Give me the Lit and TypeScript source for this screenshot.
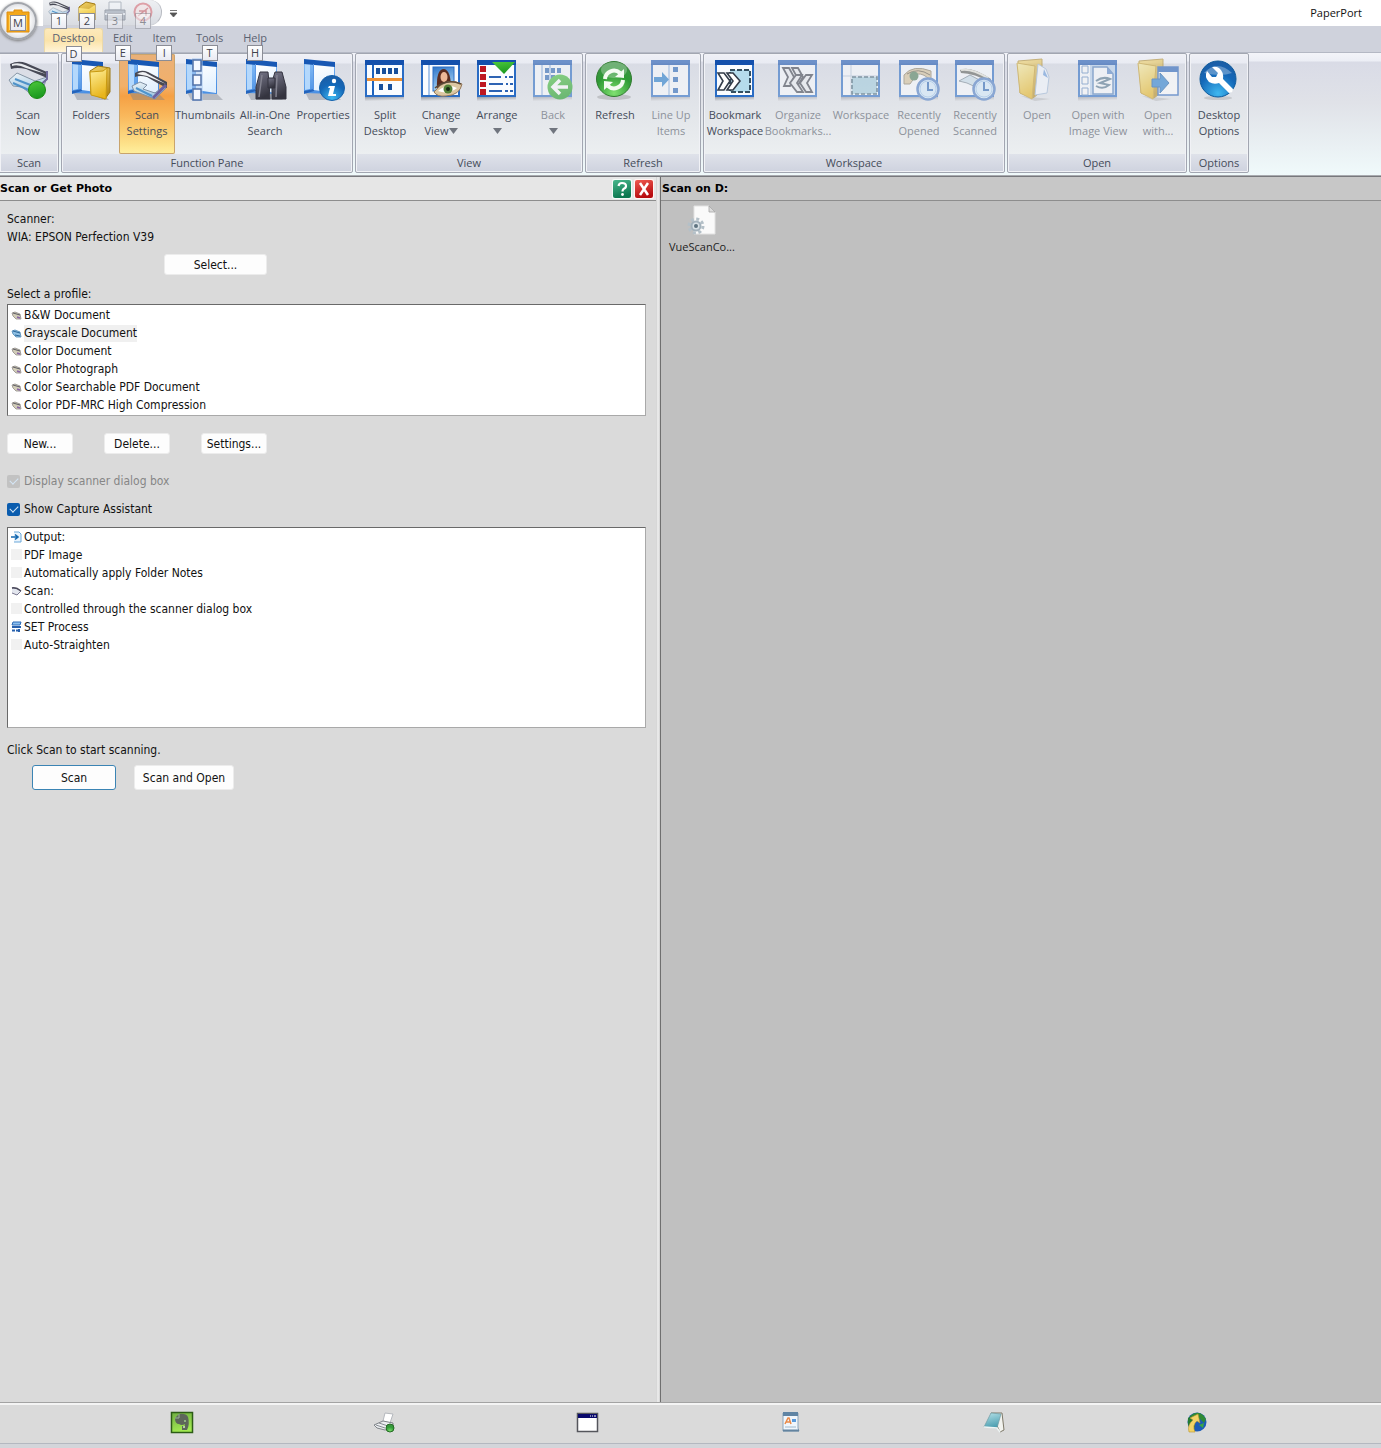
import { LitElement, html, svg, css, nothing } from "lit";
import { customElement, state } from "lit/decorators.js";
import { classMap } from "lit/directives/class-map.js";

/* ---------- shared drawing parts ---------- */

const frontWindow = (inner: unknown) => svg`
  <rect x="2" y="40" width="39" height="4" fill="url(#shade)"/>
  <rect x="2" y="3" width="39" height="37" fill="#2a6cc4"/>
  <rect x="2" y="3" width="39" height="5" fill="#1450ac"/>
  <rect x="4" y="8" width="35" height="30" fill="#fafcff"/>
  ${inner}`;

const sideWindow = (inner: unknown) => svg`
  <path d="M4 35 L34 37 L40 43 L8 43Z" fill="#777c86" opacity=".4"/>
  <path d="M3 3 L34 6 V37 L3 36Z" fill="url(#pane)"/>
  <path d="M13 7 L33 9 V36 L13 33Z" fill="url(#paper)"/>
  <path d="M4 6 L9 7 V32 L4 33Z" fill="#b4d8fc"/>
  <path d="M3 2 L34 5 V10 L3 7Z" fill="#1858b4"/>
  <path d="M3 34 L13 32 V34 L3 37Z" fill="#2464bc"/>
  <path d="M12.500 7 V33" stroke="#5c98e4"/>
  ${inner}`;

const scannerShape = svg`
  <path d="M3 23 L11 16 L29 24 L35 22 L41 20 L38 29 L26 38 L16 30 L7 29Z" fill="url(#glass)" stroke="#8696a6"/>
  <path d="M9 22 L27 29 M7 26 L25 34" stroke="#4f92c8" stroke-width="2"/>
  <path d="M4 7 Q12 3 20 6 L41 15 V21 L20 12 Q11 10 5 12Z" fill="#474955"/>
  <path d="M6 7 Q13 5 19 8 L40 17 L20 11 Q12 7 6 9Z" fill="#e9ecef"/>
  <path d="M41 14 V22 L31 31" stroke="#6f6a9c" stroke-width="2" fill="none"/>`;

const clock = svg`
  <circle cx="31" cy="32" r="10.5" fill="#d6ecfc" stroke="#4d7dc4" stroke-width="2.5"/>
  <circle cx="31" cy="32" r="8" fill="none" stroke="#9cc4ec"/>
  <path d="M31 25 V33 H36" fill="none" stroke="#2a66b4" stroke-width="2"/>`;

const folderOpen = svg`
  <path d="M3 4 L27 2 L27 34 L18 41 L5 36Z" fill="url(#goldDark)" stroke="#a98524"/>
  <path d="M2 6 L20 9 L17 42 L5 36Z" fill="url(#gold)" stroke="#c79d26"/>`;

const icons: Record<string, unknown> = {
  scanNow: svg`${scannerShape}<circle cx="31" cy="33" r="8.5" fill="url(#green)" stroke="#1b8a12"/>`,
  folders: sideWindow(svg`
    <path d="M21 14 L29 9 L41 11 V35 L36 42 L22 37Z" fill="url(#goldDark)" stroke="#9c7813"/>
    <path d="M21 15 L34 14 L38 11 L37 42 L22 38Z" fill="url(#gold)" stroke="#c99a10"/>`),
  scanSettings: sideWindow(svg`
    <path d="M7 29 L15 25 L22 28 L18 32 L30 36 L41 27 L41 31 L30 42 L9 34Z" fill="url(#glass)" stroke="#8090a4"/>
    <path d="M11 31 L27 39" stroke="#4f94cc" stroke-width="2"/>
    <path d="M10 16 Q16 12 23 15 L42 25 V31 L34 27 L22 20 Q15 18 10 20Z" fill="#484953"/>
    <path d="M12 17 Q18 13 23 17 L41 27 L22 19Z" fill="#f1f2f4"/>
    <path d="M41 28 L28 41" stroke="#6d62a0" stroke-width="3"/>`),
  thumbnails: sideWindow(svg`
    <path d="M9 1 H20 V44 H9Z" fill="#a7c8f0" opacity=".5"/>
    <g fill="#f5f8ff" stroke="#5272a8" stroke-width="1.5">
      <path d="M10 3 H18 V14 H10Z"/><path d="M10 18 H18 V28 H10Z"/><path d="M10 32 H18 V43 H10Z"/>
    </g>`),
  search: sideWindow(svg`
    <g fill="url(#dark)" stroke="#33333f">
      <path d="M17 15 H25 L26 25 L27 42 H13 V30Z"/>
      <path d="M32 15 H39 L43 30 V42 H29 V25Z"/>
      <path d="M25 21 H32 V31 H25Z"/>
    </g>
    <path d="M19 18 L16 40 M34 18 L33 40" stroke="#82828f" stroke-width="1.5"/>`),
  properties: sideWindow(svg`
    <circle cx="31" cy="31" r="12.5" fill="url(#blueBall)" stroke="#1461ac"/>
    <circle cx="33" cy="24" r="2.2" fill="#fff"/>
    <path d="M28 29 H34 L32 37 H35 V39 H27 L29 31 H27Z" fill="#fff"/>`),
  split: frontWindow(svg`
    <path d="M10 8 V38" stroke="#1d62bd" stroke-width="2"/>
    <g fill="#174f9c"><path d="M13 11h4v6h-4zM19 11h4v6h-4zM25 11h4v6h-4zM31 11h4v6h-4zM16 27h4v6h-4zM25 27h4v6h-4z"/></g>
    <path d="M4 22.5 H39" stroke="#ef9134" stroke-width="3"/>`),
  change: frontWindow(svg`
    <path d="M10 8 V38" stroke="#5a92d8" stroke-width="1"/>
    <rect x="14" y="10" width="21" height="24" fill="url(#sky)" stroke="#2a6cc4"/>
    <path d="M18 32 Q17 12 25 12 Q32 13 32 32Z" fill="#5b2c1f"/>
    <ellipse cx="25" cy="20" rx="3.5" ry="5" fill="#eeb897"/>
    <path d="M15 35 Q27 19 43 27 Q41 38 27 39 Q18 40 15 35Z" fill="#dcc7a2" stroke="#93765a"/>
    <path d="M19 34 Q28 26 38 31 Q29 38 19 34Z" fill="#fff"/>
    <circle cx="29" cy="32" r="4.5" fill="#518038"/><circle cx="29" cy="32" r="2" fill="#182a14"/>
    <path d="M16 31 Q28 21 42 27" fill="none" stroke="#5a4837" stroke-width="1.5"/>`),
  arrange: frontWindow(svg`
    <g fill="#be1822"><path d="M5 9h6v6H5zM5 17h6v6H5zM5 25h6v5H5zM5 32h6v6H5z"/></g>
    <path d="M14 20h12M30 20h2M34 20h4M14 27h14M31 27h2M35 27h3M14 34h13M30 34h3M35 34h3" stroke="#2b62b4" stroke-width="2"/>
    <path d="M17 5 H40 L29 17Z" fill="url(#green)"/>`),
  back: frontWindow(svg`
    <path d="M11 8 V38 M19 8 V38" stroke="#6294d6"/>
    <g fill="#2e68b4"><path d="M14 11h4v5h-4zM20 11h4v5h-4zM26 11h4v5h-4zM14 18h4v5h-4zM20 18h4v5h-4z"/></g>
    <circle cx="29" cy="30" r="12.5" fill="url(#green)"/>
    <path d="M37 30 H23 M29 23 L22 30 L29 37" fill="none" stroke="#fff" stroke-width="3.5"/>`),
  refresh: svg`
    <ellipse cx="21" cy="40" rx="17" ry="3" fill="#777" opacity=".3"/>
    <circle cx="21" cy="22" r="17.5" fill="url(#deepGreen)" stroke="#317b30"/>
    <ellipse cx="21" cy="13" rx="13" ry="8" fill="#fff" opacity=".28"/>
    <path d="M12 22 A9 9 0 0 1 27 16" fill="none" stroke="#f4fbf2" stroke-width="4"/>
    <path d="M22 20 L31 21 V12Z" fill="#f4fbf2"/>
    <path d="M30 23 A9 9 0 0 1 15 29" fill="none" stroke="#f4fbf2" stroke-width="4"/>
    <path d="M20 25 L11 24 V33Z" fill="#f4fbf2"/>`,
  lineUp: frontWindow(svg`
    <path d="M20 8 V38" stroke="#6c9cd8"/>
    <path d="M5 20 H13 V15 L20 22.5 L13 30 V25 H5Z" fill="#247dcc"/>
    <g fill="#2867b8"><path d="M24 10h5v5h-5zM24 20h5v5h-5zM24 31h5v5h-5z"/></g>`),
  bookmark: frontWindow(svg`
    <rect x="17" y="13" width="20" height="22" fill="#b5dcec" stroke="#344f60" stroke-width="2" stroke-dasharray="5 2"/>
    <g fill="#fff" stroke="#333c4a" stroke-width="1.6">
      <path d="M5 16 H11 L17 24 L11 33 H5 L10 24Z"/><path d="M14 16 H20 L27 24 L20 33 H14 L20 24Z"/>
    </g>`),
  organize: frontWindow(svg`
    <g fill="#eef0f3" stroke="#40444e" stroke-width="1.8">
      <path d="M7 11 H13 L18 20 L14 29 H8 L12 20Z"/><path d="M16 11 H22 L27 20 L22 28 H17 L21 20Z"/>
      <path d="M26 18 H20 L14 26 L21 35 H27 L21 26Z"/><path d="M36 18 H30 L24 26 L30 35 H36 L31 26Z"/>
    </g>`),
  workspace: frontWindow(svg`
    <path d="M12 8 V38 M4 19 H39" stroke="#b7c7da"/>
    <rect x="13" y="20" width="25" height="17" fill="#a2cddd" stroke="#3e5f72" stroke-width="1.6" stroke-dasharray="4 2"/>`),
  recentOpened: frontWindow(svg`
    <path d="M7 18 Q16 7 34 14 V24 Q27 16 20 17 L13 27 H7Z" fill="#d8c49a" stroke="#8c8168"/>
    <path d="M10 17 Q21 10 33 18" stroke="#675b46" fill="none"/>
    <circle cx="17" cy="19" r="4.5" fill="#507e59"/>
    ${clock}`),
  recentScanned: frontWindow(svg`
    <path d="M6 24 L17 18 L34 27 L27 32 L14 26Z" fill="#cbe0ec" stroke="#7d8c96"/>
    <path d="M7 13 Q17 8 38 22 V26 Q21 16 8 16Z" fill="#60625b"/>
    <path d="M8 13 Q18 11 35 21" stroke="#e6e5d9" stroke-width="2" fill="none"/>
    ${clock}`),
  open: svg`<path d="M6 39 L35 42 L20 44Z" fill="#777" opacity=".35"/>
    ${folderOpen}<path d="M23 7 L31 12 L34 20 L32 36 L20 38Z" fill="#f5f9ff" stroke="#9eb8d6"/>
    <path d="M29 12 L33 21 L28 18Z" fill="#6c9edd"/>`,
  openImage: frontWindow(svg`
    <g fill="#fff" stroke="#628bc0"><path d="M6 9h6v7H6zM6 20h6v7H6zM6 31h6v7H6z"/></g>
    <rect x="14" y="8" width="25" height="30" fill="#b9d2ee"/>
    <path d="M17 10 H31 L37 17 V37 H17Z" fill="#fafcff" stroke="#5280bc" stroke-width="1.5"/>
    <path d="M31 10 V17 H37Z" fill="#5887c8"/>
    <path d="M20 24 Q27 19 34 22 L24 26 L33 28 Q27 33 20 29" fill="none" stroke="#577890" stroke-width="2"/>`),
  openWith: svg`<path d="M6 39 L35 42 L20 44Z" fill="#777" opacity=".35"/>
    ${folderOpen}
    <rect x="22" y="10" width="20" height="28" fill="#fff" stroke="#2b66bc" stroke-width="1.5"/>
    <rect x="22" y="10" width="20" height="5" fill="#2663ba"/>
    <path d="M16 22 H24 V16 L33 26 L24 36 V30 H16Z" fill="#297fce" stroke="#1d5fa6"/>`,
  options: svg`
    <ellipse cx="21" cy="41" rx="14" ry="2" fill="#777" opacity=".25"/>
    <circle cx="21" cy="22" r="18" fill="url(#blueBall)" stroke="#0e5b9c"/>
    <path d="M7 16 Q20 2 35 16 Q24 20 7 16Z" fill="#fff" opacity=".3"/>
    <path d="M10 14 Q7 20 12 25 Q17 28 22 26 L32 36 Q36 36 36 32 L26 22 Q27 15 22 11 Q19 9 15 10 L21 16 L19 20 L15 20Z" fill="#fff"/>`,
};

const folderChip = svg`<path d="M2 8 L9 3 L18 5 V21 L13 25 L2 22Z" fill="url(#goldDark)" stroke="#a37b13"/><path d="M2 9 L12 10 L18 6 V20 L13 25 L2 22Z" fill="url(#gold)"/>`;

/* ---------- data ---------- */

interface Tool {
  icon: string;
  lines: string[];
  size: "w54" | "w56" | "w60" | "w66";
  off?: boolean;
  on?: boolean;
  menu?: "inline" | "below";
}
const t = (icon: string, lines: string[], size: Tool["size"] = "w56", extra: Partial<Tool> = {}): Tool => ({ icon, lines, size, ...extra });
const off = { off: true };

const groups: { name: string; tools: Tool[] }[] = [
  { name: "Scan", tools: [t("scanNow", ["Scan", "Now"])] },
  {
    name: "Function Pane",
    tools: [
      t("folders", ["Folders"]),
      t("scanSettings", ["Scan", "Settings"], "w56", { on: true }),
      t("thumbnails", ["Thumbnails"], "w60"),
      t("search", ["All-in-One", "Search"], "w60"),
      t("properties", ["Properties"]),
    ],
  },
  {
    name: "View",
    tools: [
      t("split", ["Split", "Desktop"]),
      t("change", ["Change", "View"], "w56", { menu: "inline" }),
      t("arrange", ["Arrange"], "w56", { menu: "below" }),
      t("back", ["Back"], "w56", { menu: "below", off: true }),
    ],
  },
  { name: "Refresh", tools: [t("refresh", ["Refresh"]), t("lineUp", ["Line Up", "Items"], "w56", off)] },
  {
    name: "Workspace",
    tools: [
      t("bookmark", ["Bookmark", "Workspace"], "w60"),
      t("organize", ["Organize", "Bookmarks..."], "w66", off),
      t("workspace", ["Workspace"], "w60", off),
      t("recentOpened", ["Recently", "Opened"], "w56", off),
      t("recentScanned", ["Recently", "Scanned"], "w56", off),
    ],
  },
  {
    name: "Open",
    tools: [
      t("open", ["Open"], "w56", off),
      t("openImage", ["Open with", "Image View"], "w66", off),
      t("openWith", ["Open", "with..."], "w54", off),
    ],
  },
  { name: "Options", tools: [t("options", ["Desktop", "Options"])] },
];

const tabs = [
  ["Desktop", "D"],
  ["Edit", "E"],
  ["Item", "I"],
  ["Tools", "T"],
  ["Help", "H"],
];

const profiles = [
  "B&W Document",
  "Grayscale Document",
  "Color Document",
  "Color Photograph",
  "Color Searchable PDF Document",
  "Color PDF-MRC High Compression",
];

const settings: [string, string][] = [
  ["output", "Output:"],
  ["blank", "PDF Image"],
  ["blank", "Automatically apply Folder Notes"],
  ["scan", "Scan:"],
  ["blank", "Controlled through the scanner dialog box"],
  ["set", "SET Process"],
  ["blank", "Auto-Straighten"],
];

const rowIcons: Record<string, unknown> = {
  profile: svg`<path d="M1 4 L4 3 L9 5 L10 10 L5 10 L2 7Z" fill="#d2cdb8" stroke="#8f8c88" stroke-width=".8"/><path d="M2 4 L9 6" stroke="#5d5d65"/><path d="M6 8 L9 9" stroke="#8865a8" stroke-width="1.6"/>`,
  picked: svg`<path d="M1 4 L4 3 L9 5 L10 10 L5 10 L2 7Z" fill="#8fc0e4" stroke="#4e88b4" stroke-width=".8"/><path d="M2 4 L9 6 M4 8 L9 9" stroke="#2b6698"/>`,
  output: svg`<path d="M3 1 H8 L10 3 V11 H3" fill="#e9f4fd" stroke="#6aa7d8"/><path d="M0 6 H6 M4 3.500 L7 6 L4 8.500" fill="none" stroke="#1468b0" stroke-width="1.600"/>`,
  blank: svg`<rect width="11" height="11" fill="#f1f1f1"/>`,
  scan: svg`<path d="M1 3 Q5 2 10 6 L6 10 L1 8" fill="#e3e6ee" stroke="#7a7890"/><path d="M1 3 Q5 2 10 6" fill="none" stroke="#4c4b5c" stroke-width="1.500"/>`,
  set: svg`<path d="M2 1 H10 L9 4 H1Z" fill="#8cc0ef" stroke="#2a6ab8"/><path d="M1 6 H10 M1 9.500 H4 M5 9.500 H7 M8 8 V11" stroke="#2660ad" stroke-width="2"/>`,
};

const dock: { name: string; art: unknown }[] = [
  {
    name: "Evernote",
    art: svg`<rect x="1.500" y="2.500" width="21" height="20" fill="url(#lime)" stroke="#2c5c16" stroke-width="1.500"/>
      <path d="M5 8 L9 4 Q16 3 18 7 Q20 14 17 20 H12 V16 H14 V18 L15 14 Q12 16 9 14 Q5 14 5 8Z" fill="#5d665a"/><path d="M5 8 H9 V4" fill="none" stroke="#9bb39a"/><circle cx="15" cy="11" r="1" fill="#9fc890"/><path d="M13 17 H15" stroke="#cfeebc" stroke-width="1.500"/>`,
  },
  {
    name: "Scanner",
    art: svg`<path d="M12 3 L20 4 L17 13 L10 11Z" fill="#fff" stroke="#b5b8bd"/>
      <path d="M1 15 L10 11 L20 13 V17 L12 20 L4 18Z" fill="#eceef0" stroke="#7f8489"/>
      <path d="M3 15 L12 18 M6 13 L15 16" stroke="#888d94"/><circle cx="17" cy="18" r="4" fill="url(#deepGreen)" stroke="#256b23"/>`,
  },
  {
    name: "Program window",
    art: svg`<rect x="1.500" y="3.500" width="20" height="18" fill="#fff" stroke="#55565c" stroke-width="1.500"/>
      <rect x="2" y="4" width="19" height="4" fill="#09096c"/><path d="M14 6h1M16 6h1M18 6h2" stroke="#fff"/>`,
  },
  {
    name: "WordPad",
    art: svg`<path d="M4 3 H19 V18 L20 21 H4Z" fill="#f0f6fc" stroke="#8ba4ba"/><rect x="4" y="2" width="15" height="4" fill="#5f84a4"/>
      <path d="M6 14 L9 8 H10 L12 14 M7 12 H11" fill="none" stroke="#ea8a48" stroke-width="1.500"/><rect x="13" y="9" width="4" height="3" fill="#5a9adb"/><path d="M6 17 H17" stroke="#a0b8cc"/><path d="M4 20.500 H20" stroke="#6384a0" stroke-width="2"/>`,
  },
  {
    name: "Notepad",
    art: svg`<path d="M9 3 L20 3 L22 20 L18 22Z" fill="#f2f3ef" stroke="#7d7868"/><path d="M9 3 L19 4 L15 18 L2 17Z" fill="url(#teal)" stroke="#6e9ba4" stroke-width=".7"/>
      <path d="M2 17 L15 18 L18 22" fill="none" stroke="#eef4f4" stroke-width="1.500"/>`,
  },
  {
    name: "Web",
    art: svg`<circle cx="12" cy="12" r="9.500" fill="#1c5cb8"/><path d="M5 6 Q12 0 18 5 L21 9 L19 13 L15 9 L10 11Z" fill="#2f8a34"/><path d="M14 15 L19 13 L18 18Z" fill="#3aa845"/><path d="M3 8 Q2 16 6 20 L10 17 L6 6Z" fill="#227a34"/>
      <path d="M4 22 L10 22 Q7 15 12 11 L15 13 L13 4 L5 8 L8 10 Q2 15 4 22Z" fill="#f2d467" stroke="#b8922c" stroke-width=".6"/>`,
  },
];

@customElement("app-root")
export class AppRoot extends LitElement {
  @state() private tab = "Desktop";
  @state() private profile = "Grayscale Document";

  static styles = css`
    :host {
      display: flex;
      flex-direction: column;
      min-height: 100vh;
      background: #dadada;
      color: #111;
      font: 12px/18px "DejaVu Sans Condensed", "Noto Sans", sans-serif;
      overflow: hidden;
    }
    * { box-sizing: border-box; }
    button { font: inherit; color: inherit; margin: 0; padding: 0; border: 0; background: none; }
    svg { display: block; flex: none; overflow: visible; }
    .defs { position: absolute; width: 0; height: 0; }

    .top { display: grid; grid-template-columns: 43px 1fr; grid-template-rows: 26px 26px; position: relative; background: #fff; font: 11px/16px "Open Sans", sans-serif; color: #4b5260; }
    .orb { position: absolute; left: -1px; top: 2px; width: 38px; height: 38px; z-index: 3; border-radius: 50%; border: 2px solid #a2a5ab; background: radial-gradient(circle, #fff 45%, #d6d8dd 80%, #f6f6f7 100%); box-shadow: 0 1px 3px #777; display: grid; place-items: center; }
    .titlebar { grid-column: 2; display: flex; align-items: center; }
    .quick { display: flex; align-items: flex-start; height: 26px; padding: 0 4px 0 2px; border-radius: 0 12px 14px 0; background: linear-gradient(#eef0f3, #d9dce2); border-right: 1px solid #b7bac1; border-bottom: 1px solid #d0d2d8; }
    .quick button { position: relative; width: 28px; height: 26px; display: flex; justify-content: center; }
    .more { margin-left: 5px; width: 12px; height: 12px; display: grid; place-items: center; }
    .title { margin-left: auto; padding-right: 19px; color: #111; }
    .tip { position: absolute; z-index: 4; left: 50%; transform: translateX(-50%); width: 16px; height: 16px; border: 1px solid #8b8d96; background: linear-gradient(#fff, #e9eaf2); font-size: 11px; line-height: 14px; text-align: center; color: #41434c; }
    .quick .tip { top: 13px; }
    .orb .tip { top: 11px; }
    .dim { opacity: .5; }
    .tabs { grid-column: 1 / 3; display: flex; padding-left: 44px; background: #cfd2dc; align-items: flex-end; }
    .tab { position: relative; height: 24px; padding: 3px 10px 7px; line-height: 14px; color: #5a6170; }
    .tab .tip { top: 17px; }
    .tab.current { width: 59px; padding: 2px 0 7px; background: linear-gradient(#fde9bb, #fbe3a9 50%, #fff4d8); border: 1px solid #ecd9a8; border-bottom: 0; border-radius: 3px 3px 0 0; }

    .ribbon { display: flex; gap: 2px; height: 124px; border-top: 1px solid #b4b8c4; background: linear-gradient(#f3f4f9, #eceef5 8px, #d9dbe6 9px, #e0e2e8 50px, #f0fafb); padding-bottom: 3px; font: 11px/16px "Open Sans", sans-serif; color: #454c5a; }
    .group { display: flex; flex-direction: column; border: 1px solid #a2a6b1; border-radius: 2px; box-shadow: inset 0 0 0 1px #f1f2f6; background: linear-gradient(#eff0f6, #e9ebf3 9px, #d9dce5 10px, #e3e6ea 60px, #eceff1 102px); }
    .group:first-child { border-left: 0; border-radius: 0 2px 2px 0; }
    .group:first-child .tools { padding: 0 2px 0 0; }
    .tools { display: flex; flex: 1; padding: 0 1px; }
    .label { margin: 0 1px 1px; height: 17px; line-height: 17px; text-align: center; background: linear-gradient(#dfe2ea, #cfd3df); }
    .tool { display: flex; flex-direction: column; align-items: center; padding-top: 3px; flex: none; border-radius: 2px; }
    .tool .art { margin-bottom: 6px; }
    .caption { display: flex; align-items: center; height: 16px; white-space: nowrap; }
    .tool:disabled { color: #8d929b; }
    .tool:disabled .art { opacity: .58; }
    .tool.on { background: linear-gradient(#e9b078, #f2b06a 32px, #f5a044 42px, #f9b85c 62px, #fde28a 90px, #fff0a0); box-shadow: inset 0 0 0 1px #c9a46c; }
    .w54 { width: 54px; } .w56 { width: 56px; } .w60 { width: 60px; } .w66 { width: 66px; }

    .work { flex: 1; display: flex; border-top: 1px solid #77787c; box-shadow: 0 -1px #a9abb0; }
    .pane { flex: 0 0 47.5%; display: flex; flex-direction: column; }
    .divider { width: 5px; background: linear-gradient(90deg, #cfcfcf, #f0f0f0 50%, #cfcfcf); border-right: 1px solid #6f6f6f; }
    .head { display: flex; align-items: center; height: 24px; border-bottom: 1px solid #8d8d8d; background: #e6e6e6; font: bold 11px/16px "DejaVu Sans", sans-serif; color: #000; }
    .head h2 { margin: 0 auto 0 0; font: inherit; }
    .sq { margin-right: 2px; width: 20px; height: 20px; }
    .form { display: flex; flex-direction: column; padding: 9px 10px 0 7px; }
    .right { padding: 8px 0 10px 157px; }
    .btn { height: 21px; background: #fdfdfd; border: 1px solid #ececec; border-radius: 3px; line-height: 18px; }
    .btn.select { width: 103px; }
    .btn.small { width: 66px; }
    .btn.tall { height: 25px; width: 100px; }
    .btn.tall.primary { width: 84px; border-color: #3b84b4; }
    .list { list-style: none; margin: 1px 0 0; padding: 1px 0 1px 3px; background: #fff; border: 1px solid #a9a9a9; border-top-color: #696969; border-left-color: #696969; }
    .list li { display: flex; align-items: center; height: 18px; }
    .list li svg { margin-right: 2px; }
    .list li span { line-height: 17px; }
    .list li.chosen span { background: #f0f0f0; }
    .list.tall { height: 201px; margin-top: 9px; padding-top: 0; }
    .trio { display: flex; gap: 31px; margin: 17px 0 18px; }
    .check { display: flex; align-items: center; gap: 4px; height: 18px; margin-bottom: 10px; }
    .check.last { margin-bottom: 0; }
    .check input { appearance: none; margin: 0; width: 13px; height: 13px; border-radius: 2px; background: #0a5cae; display: grid; place-items: center; }
    .check input::after { content: ""; width: 7px; height: 4px; border: solid #d5e6f6; border-width: 0 0 1px 1px; transform: rotate(-45deg) translate(1px, -1px); }
    .check.disabled { color: #868686; }
    .check.disabled input { background: #c2c2c2; }
    .hint { margin: 13px 0 6px; }
    .duo { display: flex; gap: 18px; padding-left: 25px; }

    .desk { flex: 1; background: #c0c0c0; }
    .desk .head { background: #c7c7c7; }
    .desk .head h2 { margin-left: 1px; }
    .file { display: flex; flex-direction: column; align-items: center; width: 82px; margin-top: 4px; font: 11px/16px "Open Sans", sans-serif; color: #222; }
    .file svg { margin-bottom: 3px; }

    .dock { display: grid; grid-template-columns: repeat(6, 1fr); height: 46px; padding: 7px 6% 0 5.8%; border-top: 1px solid #a3a3a3; box-shadow: inset 0 2px #f4f4f4, inset 0 -4px #d3d5da, inset 0 -5px #b4b8c0; }
    .dock button { justify-self: center; align-self: start; }
  `;

  private defs() {
    const lin = (id: string, a: string, b: string) => svg`
      <linearGradient id=${id} x1="0" y1="0" x2=".3" y2="1"><stop offset="0" stop-color=${a}/><stop offset="1" stop-color=${b}/></linearGradient>`;
    return html`<svg class="defs" aria-hidden="true"><defs>
      ${lin("gold", "#fff2a0", "#e8b51c")}
      ${lin("goldDark", "#f3d468", "#b98c18")}
      ${lin("pane", "#8cc2f8", "#4a90e4")}
      ${lin("paper", "#ffffff", "#e2f0fe")}
      ${lin("glass", "#eef4f8", "#9cc4e0")}
      ${lin("green", "#4cc83c", "#1c9a20")}
      ${lin("dark", "#77778a", "#34343f")}
      ${lin("sky", "#2d74c8", "#a8d4f4")}
      ${lin("shade", "#9a9ea8", "#e2e4e8")}
      ${lin("lime", "#6fae42", "#a2ea52")}
      ${lin("teal", "#b7e2e8", "#4ea0b2")}
      ${lin("red", "#ef5a50", "#b80c10")}
      ${lin("help", "#48b78c", "#0c7850")}
      <radialGradient id="blueBall" cx=".5" cy=".9" r=".9"><stop offset="0" stop-color="#3fb8f0"/><stop offset=".6" stop-color="#1468b8"/><stop offset="1" stop-color="#1c5ca4"/></radialGradient>
      <radialGradient id="deepGreen" cx=".5" cy=".9" r=".9"><stop offset="0" stop-color="#7fe070"/><stop offset=".6" stop-color="#2f9a35"/><stop offset="1" stop-color="#3f9247"/></radialGradient>
    </defs></svg>`;
  }

  private arrow = html`<svg width="9" height="6" viewBox="0 0 9 6"><path d="M0 0 H9 L4.500 6Z" fill="#70757e"/></svg>`;

  private tool(x: Tool) {
    return html`<button class=${classMap({ tool: true, [x.size]: true, on: !!x.on })} ?disabled=${x.off}>
      <svg class="art" width="44" height="44" viewBox="0 0 44 44" aria-hidden="true">${icons[x.icon]}</svg>
      ${x.lines.map((l, i) => html`<span class="caption">${l}${x.menu === "inline" && i === 1 ? this.arrow : nothing}</span>`)}
      ${x.menu === "below" ? html`<span class="caption">${this.arrow}</span>` : nothing}
    </button>`;
  }

  private header() {
    return html`<header class="top">
      <button class="orb" aria-label="Menu">
        <svg width="28" height="28" viewBox="0 0 28 28"><path d="M3 5 H10 V3 H18 V5 H25 V25 H3Z" fill="#f3a81c" stroke="#dd8c0c"/><path d="M5 8 H23 V23 H5Z" fill="#ffd05c"/></svg>
        <span class="tip">M</span>
      </button>
      <div class="titlebar">
        <div class="quick">
          <button aria-label="Scan"><svg width="24" height="22" viewBox="0 2 44 40">${scannerShape}</svg><span class="tip">1</span></button>
          <button aria-label="Folder"><svg width="20" height="26" viewBox="0 1 20 26">${folderChip}</svg><span class="tip">2</span></button>
          <button aria-label="Print" disabled><svg class="dim" width="24" height="26" viewBox="0 0 24 26"><path d="M6 2 H18 V10 H6Z" fill="#f4f7fb" stroke="#7d8796"/><path d="M2 10 H22 V20 H2Z" fill="#8f9aaa" stroke="#555e6e"/><path d="M2 14 H22" stroke="#dfe4ec" stroke-width="2"/></svg><span class="tip dim">3</span></button>
          <button aria-label="Stop" disabled><svg class="dim" width="24" height="26" viewBox="0 0 24 26"><circle cx="12" cy="12" r="8.500" fill="#f7e2e2" stroke="#d25560" stroke-width="2"/><path d="M7 16 L17 8 M8 11 H15 V16" stroke="#c44650" fill="none" stroke-width="1.500"/></svg><span class="tip dim">4</span></button>
        </div>
        <button class="more" aria-label="Customize toolbar"><svg width="7" height="7" viewBox="0 0 7 7"><path d="M0 .500 H7 M0 3 H7 L3.500 7Z" fill="#555" stroke="#555" stroke-width=".8"/></svg></button>
        <span class="title">PaperPort</span>
      </div>
      <nav class="tabs">
        ${tabs.map(([n, k]) => html`<button class=${classMap({ tab: true, current: n === this.tab })} @click=${() => (this.tab = n)}>${n}<span class="tip">${k}</span></button>`)}
      </nav>
    </header>`;
  }

  render() {
    const row = (icon: string, text: string) => html`<svg width="11" height="12" viewBox="0 0 11 12" aria-hidden="true">${rowIcons[icon]}</svg><span>${text}</span>`;
    return html`
      ${this.defs()} ${this.header()}
      <div class="ribbon">
        ${groups.map((g) => html`<section class="group"><div class="tools">${g.tools.map((x) => this.tool(x))}</div><div class="label">${g.name}</div></section>`)}
      </div>
      <main class="work">
        <section class="pane">
          <div class="head">
            <h2>Scan or Get Photo</h2>
            <button class="sq" aria-label="Help"><svg width="20" height="20" viewBox="0 0 20 20"><rect width="20" height="20" rx="2" fill="#f4fbf8"/><rect x="1" y="1" width="18" height="18" rx="2" fill="url(#help)"/><path d="M6.500 7 Q7 4 10 4 Q14 4 14 7 Q14 9 11.500 10 Q10.500 11 10.500 12.500" fill="none" stroke="#fff" stroke-width="2.200"/><circle cx="10.500" cy="15.500" r="1.400" fill="#fff"/></svg></button>
            <button class="sq" aria-label="Close"><svg width="20" height="20" viewBox="0 0 20 20"><rect width="20" height="20" rx="2" fill="#fff4f2"/><rect x="1" y="1" width="18" height="18" rx="2" fill="url(#red)"/><path d="M6 4 L14 16 M14 4 L6 16" stroke="#fff" stroke-width="2.500"/></svg></button>
          </div>
          <div class="form">
            <div>Scanner:</div>
            <div>WIA: EPSON Perfection V39</div>
            <div class="right"><button class="btn select">Select...</button></div>
            <div id="profiles">Select a profile:</div>
            <ul class="list" role="listbox" aria-labelledby="profiles">
              ${profiles.map((p) => html`<li role="option" aria-selected=${p === this.profile} class=${classMap({ chosen: p === this.profile })} @click=${() => (this.profile = p)}>${row(p === this.profile ? "picked" : "profile", p)}</li>`)}
            </ul>
            <div class="trio"><button class="btn small">New...</button><button class="btn small">Delete...</button><button class="btn small">Settings...</button></div>
            <label class="check disabled"><input type="checkbox" checked disabled />Display scanner dialog box</label>
            <label class="check last"><input type="checkbox" checked />Show Capture Assistant</label>
            <ul class="list tall">${settings.map(([i, s]) => html`<li>${row(i, s)}</li>`)}</ul>
            <div class="hint">Click Scan to start scanning.</div>
            <div class="duo"><button class="btn tall primary">Scan</button><button class="btn tall">Scan and Open</button></div>
          </div>
        </section>
        <div class="divider"></div>
        <section class="desk">
          <div class="head"><h2>Scan on D:</h2></div>
          <button class="file">
            <svg width="30" height="31" viewBox="0 0 30 31"><path d="M7 1 H22 L28 7 V29 H7Z" fill="#fafafa" stroke="#e2e2e2"/><path d="M22 1 V7 H28Z" fill="#dcdcdc" stroke="#a4a4a4" stroke-width=".8"/>
              <circle cx="9" cy="21" r="7" fill="none" stroke="#b4c0c8" stroke-width="3" stroke-dasharray="3 2.500"/><circle cx="9" cy="21" r="4.500" fill="#d8e0e5" stroke="#a4b2bc" stroke-width="2"/><circle cx="9" cy="21" r="2" fill="#5f7380"/></svg>
            VueScanCo...
          </button>
        </section>
      </main>
      <footer class="dock">
        ${dock.map((d) => html`<button aria-label=${d.name}><svg width="24" height="24" viewBox="0 0 24 24">${d.art}</svg></button>`)}
      </footer>
    `;
  }
}
